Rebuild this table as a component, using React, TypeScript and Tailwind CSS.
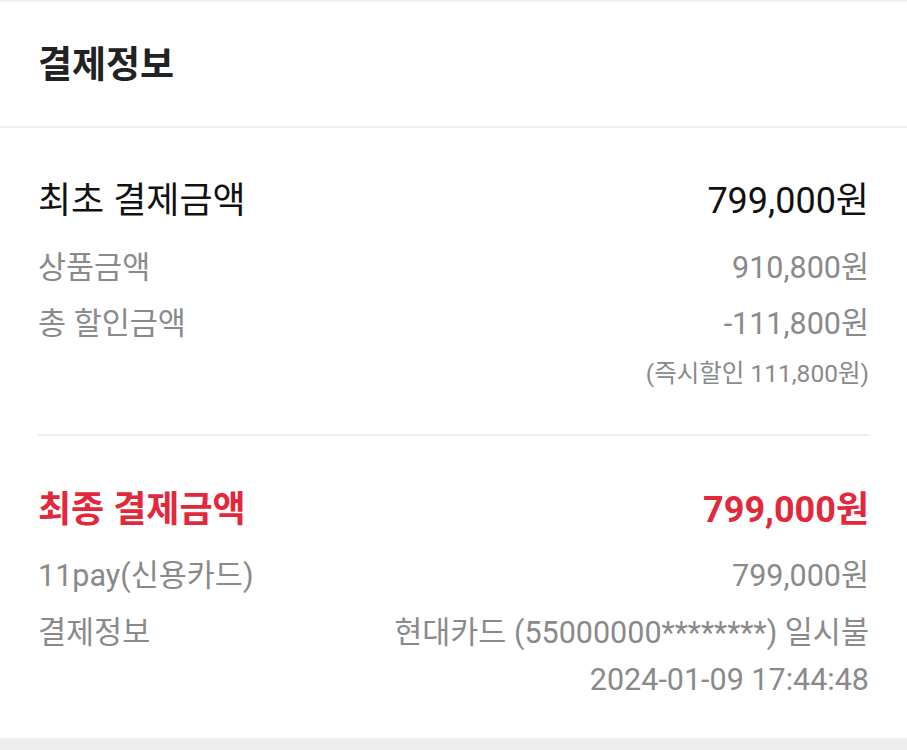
import React from 'react';

interface Line {
  label: string;
  value: string;
}

const font = "font-['Roboto','Noto_Sans_CJK_KR',sans-serif]";

export default function App() {
  const original: Line[] = [
    { label: '상품금액', value: '910,800원' },
    { label: '총 할인금액', value: '-111,800원' },
  ];

  return (
    <div className={`w-[907px] h-[750px] bg-white border-t-2 border-[#f2f2f2] flex flex-col ${font}`}>
      {/* header */}
      <div className="h-[126px] flex items-center px-[38px] pt-[4px] border-b-2 border-[#f0f0f0]">
        <h2 className="text-[37px] leading-[40px] font-bold text-[#222222]">결제정보</h2>
      </div>

      <div className="px-[38px] pt-[53px]">
        <div className="flex justify-between items-center h-[40px] text-[36px] text-[#111111]">
          <span>최초 결제금액</span>
          <span>799,000원</span>
        </div>
        <div className="mt-[27px] flex flex-col gap-[16px]">
          {original.map((row) => (
            <div key={row.label} className="flex justify-between items-center h-[40px] text-[30.5px] text-[#8a8a8a]">
              <span>{row.label}</span>
              <span>{row.value}</span>
            </div>
          ))}
        </div>
        <div className="mt-[15px] h-[30px] flex justify-end items-center text-[24.5px] text-[#8a8a8a]">
          (즉시할인 111,800원)
        </div>
        <div className="mt-[45px] border-t-2 border-[#eeeeee]" />

        <div className="pt-[54px] pb-[43px]">
          <div className="flex justify-between items-center h-[40px] text-[36px] font-bold text-[#e2283b]">
            <span>최종 결제금액</span>
            <span>799,000원</span>
          </div>
          <div className="mt-[26px] flex justify-between items-center h-[40px] text-[30.5px] text-[#8a8a8a]">
            <span>11pay(신용카드)</span>
            <span>799,000원</span>
          </div>
          <div className="mt-[17px] flex justify-between items-start text-[30.5px] text-[#8a8a8a]">
            <span className="h-[40px] flex items-center">결제정보</span>
            <div className="flex flex-col items-end">
              <span className="h-[40px] flex items-center">현대카드 (55000000********) 일시불</span>
              <span className="mt-[12px] h-[30px] flex items-center">2024-01-09 17:44:48</span>
            </div>
          </div>
        </div>
      </div>

      <div className="flex-1 bg-[#eeeeee]" />
    </div>
  );
}
